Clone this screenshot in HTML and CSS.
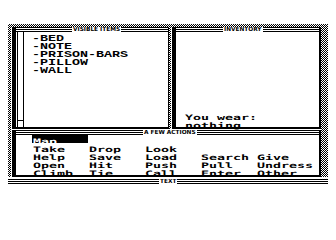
FILE: index.html
```html
<!DOCTYPE html>
<html>
<head>
<meta charset="utf-8">
<link rel="stylesheet" href="styles.css">
</head>
<body>
<div class="screen">
  <div class="toprow">
    <section class="win win-items">
      <div class="frame">
        <div class="titlebar"><i class="ln lead-items"></i><span class="ttl">VISIBLE ITEMS</span><i class="ln"></i></div>
        <div class="body">
          <div class="scroll"><div class="track"></div><div class="btn"></div></div>
          <ul class="list">
            <li class="item"><span class="gs">-BED</span></li>
            <li class="item"><span class="gs">-NOTE</span></li>
            <li class="item"><span class="gs">-PRISON-BARS</span></li>
            <li class="item"><span class="gs">-PILLOW</span></li>
            <li class="item"><span class="gs">-WALL</span></li>
          </ul>
        </div>
      </div>
    </section>
    <section class="win win-inv">
      <div class="frame">
        <div class="titlebar"><i class="ln lead-inv"></i><span class="ttl">INVENTORY</span><i class="ln"></i></div>
        <div class="inv-body">
          <div class="line"><span class="g">You wear:</span></div>
          <div class="line"><span class="g">nothing</span></div>
        </div>
      </div>
    </section>
  </div>
  <section class="win win-actions">
    <div class="frame">
      <div class="titlebar"><i class="ln lead-act"></i><span class="ttl">A FEW ACTIONS</span><i class="ln"></i></div>
      <div class="grid">
        <div class="cell sel"><span class="g">Map</span></div><div class="cell"></div><div class="cell"></div><div class="cell"></div><div class="cell"></div>
        <div class="cell"><span class="g">Take</span></div><div class="cell"><span class="g">Drop</span></div><div class="cell"><span class="g">Look</span></div><div class="cell"></div><div class="cell"></div>
        <div class="cell"><span class="g">Help</span></div><div class="cell"><span class="g">Save</span></div><div class="cell"><span class="g">Load</span></div><div class="cell"><span class="g">Search</span></div><div class="cell"><span class="g">Give</span></div>
        <div class="cell"><span class="g">Open</span></div><div class="cell"><span class="g">Hit</span></div><div class="cell"><span class="g">Push</span></div><div class="cell"><span class="g">Pull</span></div><div class="cell"><span class="g">Undress</span></div>
        <div class="cell"><span class="g">Climb</span></div><div class="cell"><span class="g">Tie</span></div><div class="cell"><span class="g">Call</span></div><div class="cell"><span class="g">Enter</span></div><div class="cell"><span class="g">Other</span></div>
      </div>
    </div>
  </section>
</div>
<div class="titlebar textbar"><i class="ln lead-text"></i><span class="ttl">TEXT</span><i class="ln"></i></div>
</body>
</html>
```
FILE: styles.css
```css
* { box-sizing: border-box; margin: 0; padding: 0; }
html, body { background: #fff; }
body {
  width: 336px;
  height: 240px;
  overflow: hidden;
  color: #000;
  font-family: "DejaVu Sans Mono", monospace;
}

.screen {
  margin: 24px 0 0 8px;
  width: 320px;
  padding: 3px 7px 0 3px;
  background: repeating-conic-gradient(#000 0 25%, #fff 0 50%) 0 0 / 2px 2px;
}

.toprow { display: flex; gap: 2px; height: 102px; }

.win { background: #fff; padding-left: 1px; display: flex; }
.win-items { width: 158px; }
.win-inv { width: 150px; }
.win-actions { padding-top: 1px; height: 48px; }

.frame {
  flex: 1;
  display: flex;
  flex-direction: column;
  border-left: 4px solid #000;
  border-right: 1px solid #000;
  border-bottom: 2px solid #000;
}
.win-inv .frame, .win-actions .frame { border-right-width: 2px; }

.titlebar { display: flex; height: 5px; flex: none; }
.ln {
  flex: 1;
  height: 5px;
  background: repeating-linear-gradient(to bottom, #000 0 1px, #fff 1px 2px);
}
.lead-items { flex: 0 0 56px; }
.lead-inv { flex: 0 0 47px; }
.lead-act { flex: 0 0 127px; }
.lead-text { flex: 0 0 151px; }
.ttl {
  background: #fff;
  padding: 0 1px;
  height: 5px;
  font: bold 5.8px/5px "DejaVu Sans", sans-serif;
  white-space: nowrap;
  overflow: hidden;
}

.body { flex: 1; display: flex; }
.scroll {
  width: 7px;
  margin-left: 1px;
  border-left: 1px solid #000;
  border-right: 1px solid #000;
  display: flex;
  flex-direction: column;
}
.track { flex: 1; }
.btn { height: 7px; border-top: 1px solid #000; }

.list { list-style: none; padding-left: 8px; }
.item { height: 8px; line-height: 8px; }

.gs {
  display: inline-block;
  font: bold 9.5px/8px "Liberation Mono", monospace;
  transform: scaleX(1.404);
  transform-origin: 0 50%;
  white-space: pre;
}
.g {
  display: inline-block;
  font: bold 7.5px/8px "DejaVu Sans Mono", monospace;
  transform: scaleX(1.772);
  transform-origin: 0 50%;
  white-space: pre;
  padding-left: 0.6px;
}

.inv-body { padding: 79px 0 0 8px; }
.line { height: 8px; line-height: 8px; }

.grid {
  display: grid;
  grid-template-columns: repeat(5, 56px);
  grid-auto-rows: 8px;
  padding-left: 16px;
}
.cell { height: 8px; line-height: 8px; }
.sel { background: #000; color: #fff; }

.textbar { margin: 2px 0 0 8px; width: 320px; }
```
